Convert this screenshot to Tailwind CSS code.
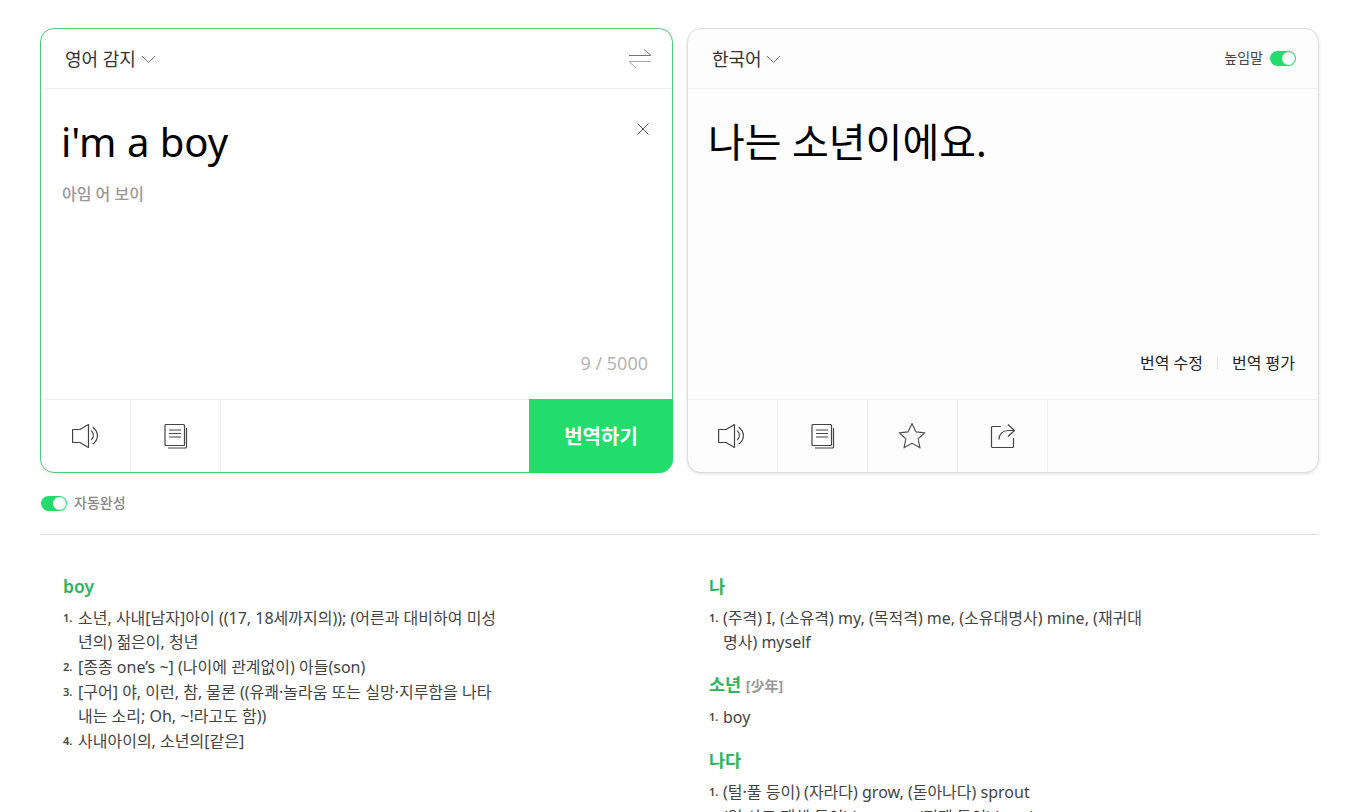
<!DOCTYPE html>
<html lang="ko">
<head>
  <meta charset="UTF-8" />
  <title>번역</title>
  <script src="https://cdn.jsdelivr.net/npm/@tailwindcss/browser@4"></script>
</head>
<body class="bg-white h-[812px] overflow-hidden font-['Noto_Sans','Noto_Sans_CJK_KR',sans-serif] text-[#333]">
  <div class="w-[1279px] ml-[40px] pt-[28px]">
    <div class="flex gap-[14px]">
      <!-- source panel -->
      <section class="w-[633px] h-[445px] border border-[#4fc97a] rounded-[14px] bg-white flex flex-col shadow-[0_1px_3px_rgba(0,0,0,0.08)]">
        <div class="h-[60px] shrink-0 border-b border-[#f0f0f0] flex items-center justify-between pl-[24px] pr-[20px]">
          <div class="flex items-center gap-[5px] text-[18px] text-[#333] pt-[2px]">
            <span>영어 감지</span>
            <svg width="15" height="9" viewBox="0 0 15 9" fill="none" stroke="#777" stroke-width="1"><path d="M1 1l6.500 6.500L14 1"/></svg>
          </div>
          <svg width="24" height="20" viewBox="0 0 24 20" fill="none" stroke="#777" stroke-width="1"><path d="M1 6.500h22L16 .5"/><path d="M23 12.500H1L8 19" stroke="#aaa"/></svg>
        </div>
        <div class="flex-1 relative pl-[20px] pr-[24px]">
          <p class="text-[40px] leading-[50px] text-black mt-[28px]">i'm a boy</p>
          <p class="text-[16px] leading-[20px] pl-px font-medium text-[#999] mt-[17px]">아임 어 보이</p>
          <svg class="absolute right-[23px] top-[34px]" width="12" height="12" viewBox="0 0 12 12" fill="none" stroke="#555" stroke-width="1"><path d="M.5 .5l11 11M11.500 .5l-11 11"/></svg>
          <span class="absolute right-[24px] bottom-[25px] text-[18px] leading-[22px] text-[#b5b5b5]">9 / 5000</span>
        </div>
        <div class="h-[73px] shrink-0 border-t border-[#f0f0f0] flex">
          <div class="w-[90px] border-r border-[#f0f0f0] flex items-center justify-center">
            <svg width="28" height="24" viewBox="0 0 28 24" fill="none" stroke="#444" stroke-width="1.200" stroke-linejoin="round"><path d="M.6 5.500h7.400L16.500 .6v22.800L8 18.500H.6z"/><path d="M19.300 6.700c2.700 2.800 2.700 6.600 0 9.300"/><path d="M20.700 3.300c6.300 4.600 6.300 12.200 0 16.700"/></svg>
          </div>
          <div class="w-[90px] border-r border-[#f0f0f0] flex items-center justify-center">
            <svg width="26" height="26" viewBox="0 0 26 26" fill="none" stroke="#444" stroke-width="1.200" stroke-linejoin="round"><rect x="2" y="1.500" width="19.500" height="21" rx="1"/><path d="M23.500 5v19a1 1 0 0 1-1 1H5M6 7h12M6 10.500h12M6 14h12"/></svg>
          </div>
          <div class="flex-1"></div>
          <div class="w-[144px] -mr-px -mb-px -mt-px h-[74px] bg-[#22dd6c] rounded-br-[14px] flex items-center justify-center pt-[2px] text-white text-[20px] font-bold">번역하기</div>
        </div>
      </section>
      <!-- target panel -->
      <section class="w-[632px] h-[445px] border border-[#dedede] rounded-[14px] bg-[#fdfdfd] flex flex-col shadow-[0_1px_3px_rgba(0,0,0,0.12)]">
        <div class="h-[60px] shrink-0 border-b border-[#f0f0f0] flex items-center justify-between pl-[24px] pr-[22px]">
          <div class="flex items-center gap-[4px] text-[18px] text-[#333] pt-[2px]">
            <span>한국어</span>
            <svg width="15" height="9" viewBox="0 0 15 9" fill="none" stroke="#777" stroke-width="1"><path d="M1 1l6.500 6.500L14 1"/></svg>
          </div>
          <div class="flex items-center gap-[7px]">
            <span class="text-[14px] text-[#444] -translate-y-px">높임말</span>
            <span class="w-[26px] h-[15px] rounded-full bg-[#22dd6c] flex items-center justify-end pr-[1px]"><span class="w-[13px] h-[13px] rounded-full bg-white"></span></span>
          </div>
        </div>
        <div class="flex-1 relative pl-[20px] pr-[23px]">
          <p class="text-[40px] leading-[50px] text-black mt-[28px]">나는 소년이에요.</p>
          <div class="absolute right-[23px] bottom-[25px] flex items-center text-[16px] leading-[22px] text-[#222]">
            <span>번역 수정</span>
            <span class="w-px h-[11px] bg-[#e2e2e2] mx-[14px]"></span>
            <span>번역 평가</span>
          </div>
        </div>
        <div class="h-[73px] shrink-0 border-t border-[#f0f0f0] flex">
          <div class="w-[90px] border-r border-[#f0f0f0] flex items-center justify-center">
            <svg class="-translate-x-px" width="28" height="24" viewBox="0 0 28 24" fill="none" stroke="#444" stroke-width="1.200" stroke-linejoin="round"><path d="M.6 5.500h7.400L16.500 .6v22.800L8 18.500H.6z"/><path d="M19.300 6.700c2.700 2.800 2.700 6.600 0 9.300"/><path d="M20.700 3.300c6.300 4.600 6.300 12.200 0 16.700"/></svg>
          </div>
          <div class="w-[90px] border-r border-[#f0f0f0] flex items-center justify-center">
            <svg width="26" height="26" viewBox="0 0 26 26" fill="none" stroke="#444" stroke-width="1.200" stroke-linejoin="round"><rect x="2" y="1.500" width="19.500" height="21" rx="1"/><path d="M23.500 5v19a1 1 0 0 1-1 1H5M6 7h12M6 10.500h12M6 14h12"/></svg>
          </div>
          <div class="w-[90px] border-r border-[#f0f0f0] flex items-center justify-center">
            <svg class="-translate-x-[1px] -translate-y-[1px]" width="28" height="27" viewBox="0 0 28 27" fill="none" stroke="#555" stroke-width="1.200" stroke-linejoin="round"><path d="M14 1.500l3.800 8.300 9 1-6.700 6.100 1.900 8.900L14 21.300l-8 4.500 1.900-8.900L1.200 10.800l9-1z"/></svg>
          </div>
          <div class="w-[90px] border-r border-[#f0f0f0] flex items-center justify-center">
            <svg width="26" height="26" viewBox="0 0 26 26" fill="none" stroke="#444" stroke-width="1.200" stroke-linejoin="round"><path d="M11 3.500H2.500a1 1 0 0 0-1 1v19a1 1 0 0 0 1 1h20a1 1 0 0 0 1-1V15"/><path d="M18 1.500l6.500 6-6.500 6"/><path d="M24 7.500h-6c-5 0-9 3.500-9 9"/></svg>
          </div>
        </div>
      </section>
    </div>

    <div class="flex items-center gap-[7px] h-[20px] mt-[20px] ml-px">
      <span class="w-[26px] h-[15px] rounded-full bg-[#22dd6c] flex items-center justify-end pr-[1px]"><span class="w-[13px] h-[13px] rounded-full bg-white"></span></span>
      <span class="text-[14px] font-medium text-[#888] -translate-y-px">자동완성</span>
    </div>

    <div class="border-t border-[#dedede] mt-[21px] grid grid-cols-[668px_1fr] pt-[39px] text-[16px] leading-[24px] text-[#444]">
      <div class="pl-[23px]">
        <h3 class="text-[17.5px] leading-[24px] font-semibold text-[#2db45a]">boy</h3>
        <ol class="mt-[8px] w-[440px] flex flex-col gap-px">
          <li class="flex"><span class="w-[15px] shrink-0 text-[11px] font-semibold">1.</span><span class="break-all">소년, 사내[남자]아이 ((17, 18세까지의)); (어른과 대비하여 미성년의) 젊은이, 청년</span></li>
          <li class="flex"><span class="w-[15px] shrink-0 text-[11px] font-semibold">2.</span><span>[종종 one’s ~] (나이에 관계없이) 아들(son)</span></li>
          <li class="flex"><span class="w-[15px] shrink-0 text-[11px] font-semibold">3.</span><span>[구어] 야, 이런, 참, 물론 ((유쾌·놀라움 또는 실망·지루함을 나타내는 소리; Oh, ~!라고도 함))</span></li>
          <li class="flex"><span class="w-[15px] shrink-0 text-[11px] font-semibold">4.</span><span>사내아이의, 소년의[같은]</span></li>
        </ol>
      </div>
      <div class="pl-[1px]">
        <h3 class="text-[17.5px] leading-[24px] font-semibold text-[#2db45a]">나</h3>
        <ol class="mt-[8px] w-[440px]">
          <li class="flex"><span class="w-[14px] shrink-0 text-[11px] font-semibold">1.</span><span>(주격) I, (소유격) my, (목적격) me, (소유대명사) mine, (재귀대명사) myself</span></li>
        </ol>
        <h3 class="mt-[18px] text-[17.5px] leading-[24px] font-semibold text-[#2db45a]">소년 <span class="text-[14px] font-bold text-[#999]">[少年]</span></h3>
        <ol class="mt-[7px] w-[440px]">
          <li class="flex"><span class="w-[14px] shrink-0 text-[11px] font-semibold">1.</span><span>boy</span></li>
        </ol>
        <h3 class="mt-[19px] text-[17.5px] leading-[24px] font-semibold text-[#2db45a]">나다</h3>
        <ol class="mt-[8px] w-[440px] flex flex-col gap-px">
          <li class="flex"><span class="w-[14px] shrink-0 text-[11px] font-semibold">1.</span><span>(털·풀 등이) (자라다) grow, (돋아나다) sprout</span></li>
          <li class="flex"><span class="w-[14px] shrink-0 text-[11px] font-semibold">2.</span><span>(일·사고·재해 등이) happen, (전쟁 등이) break out</span></li>
        </ol>
      </div>
    </div>
  </div>
</body>
</html>
